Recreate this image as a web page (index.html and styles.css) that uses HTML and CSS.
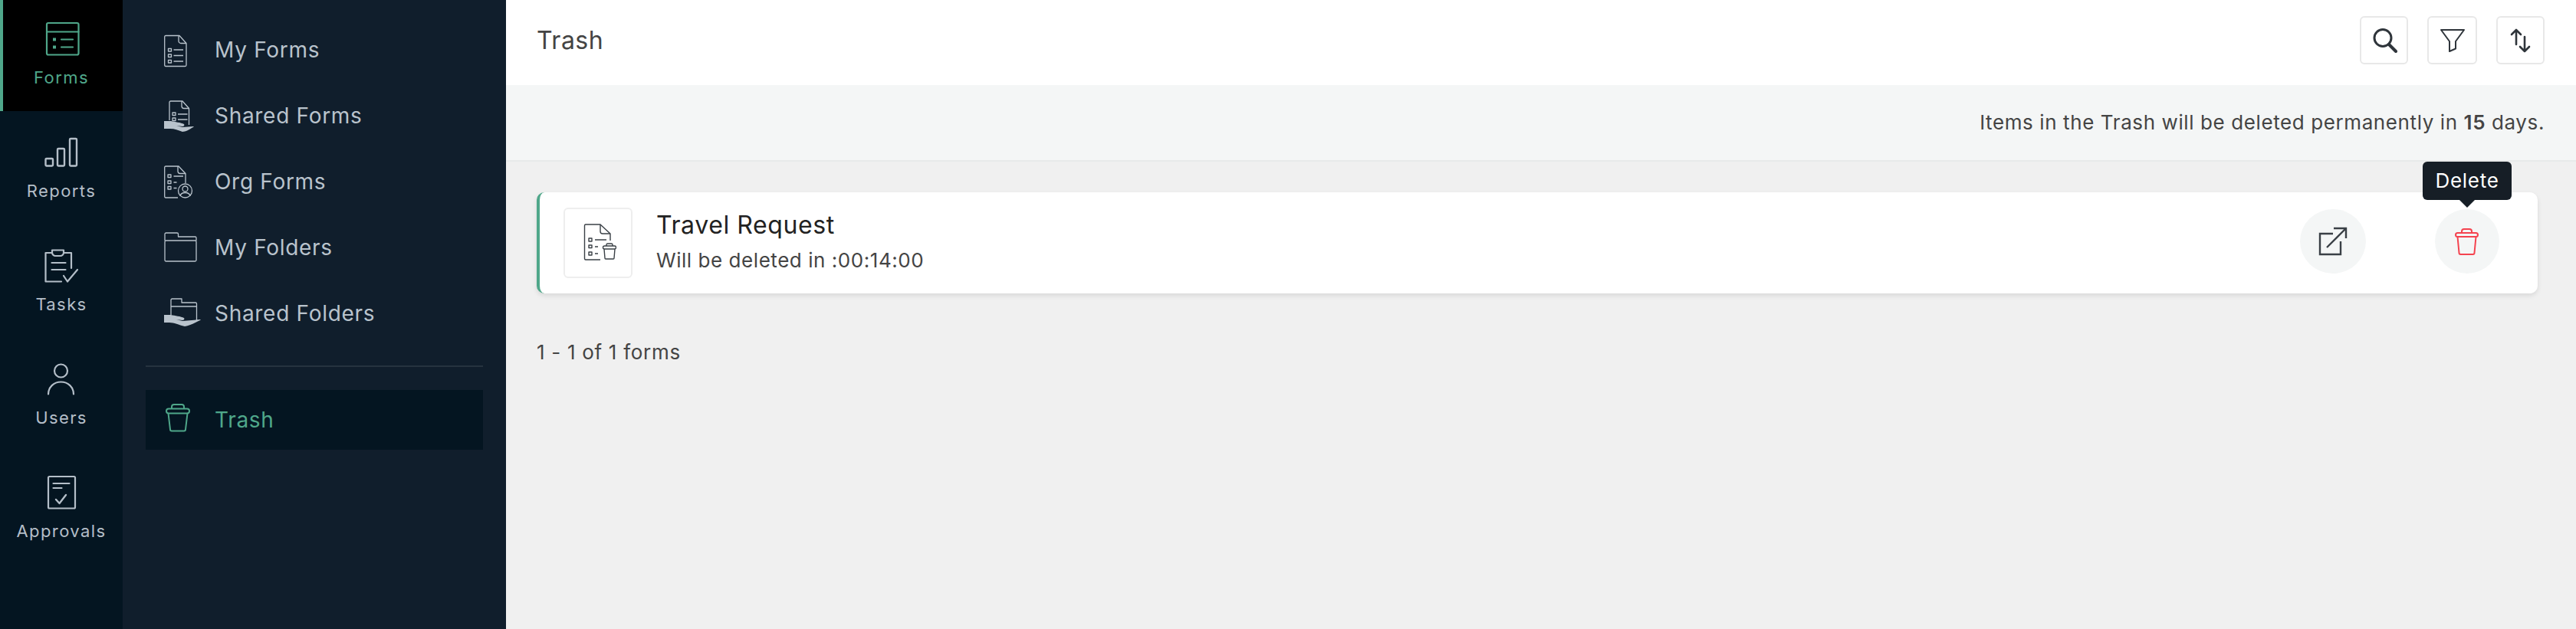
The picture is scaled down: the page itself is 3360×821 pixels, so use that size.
FILE: index.html
```html
<!DOCTYPE html>
<html lang="en">
<head>
    <meta charset="UTF-8">
    <title>Trash</title>
    <link rel="stylesheet" href="styles.css">
</head>
<body>
    <div class="app">
        <nav class="rail">
            <a class="rail-item active">
                <svg class="ico48" viewBox="0 0 48 48" fill="none" stroke="currentColor" stroke-width="2.2" stroke-linejoin="round" stroke-linecap="round">
                    <rect x="5" y="4" width="41.500" height="41.500" rx="2"/>
                    <path d="M5 15.500h41.500M24 25.500h15M24 35.500h15"/>
                    <path d="M13 25.500h4M13 35.500h4" stroke-width="3.800" stroke-linecap="butt"/>
                </svg>
                <span>Forms</span>
            </a>
            <a class="rail-item">
                <svg class="ico48" viewBox="0 0 48 48" fill="none" stroke="currentColor" stroke-width="2.4" stroke-linejoin="round">
                    <rect x="3.500" y="33" width="9.500" height="9.500" rx="1.200"/>
                    <rect x="19" y="20" width="9" height="22.500" rx="1.200"/>
                    <rect x="35" y="7" width="9" height="35.500" rx="1.200"/>
                </svg>
                <span>Reports</span>
            </a>
            <a class="rail-item">
                <svg class="ico48" viewBox="0 0 48 48" fill="none" stroke="currentColor" stroke-width="2.2" stroke-linecap="round" stroke-linejoin="round">
                    <path d="M12 8H3.500V45.500H24M27 8h10V28"/>
                    <path d="M12 4.500h15v3a4.500 4.500 0 0 1-4.500 4.500h-6A4.500 4.500 0 0 1 12 7.500z"/>
                    <path d="M11.500 21h18M11.500 30h18"/>
                    <path d="M27 38l5 7.500L45 30"/>
                </svg>
                <span>Tasks</span>
            </a>
            <a class="rail-item">
                <svg class="ico48" viewBox="0 0 48 48" fill="none" stroke="currentColor" stroke-width="2.2" stroke-linecap="round">
                    <circle cx="23.500" cy="14" r="8.500"/>
                    <path d="M7 44.500c0-9 7-16 16.500-16s16.500 7 16.500 16"/>
                </svg>
                <span>Users</span>
            </a>
            <a class="rail-item">
                <svg class="ico48" viewBox="0 0 48 48" fill="none" stroke="currentColor" stroke-width="2.2" stroke-linejoin="round" stroke-linecap="round">
                    <rect x="7" y="4" width="35" height="41.500" rx="1.500"/>
                    <path d="M13.500 13h21M13.500 19h11"/>
                    <path d="M17 34l4.500 5L30 28" stroke-width="2.400"/>
                </svg>
                <span>Approvals</span>
            </a>
        </nav>

        <aside class="sidebar">
            <ul class="side-list">
                <li class="side-item">
                    <svg class="ico48" viewBox="0 0 48 48" fill="none" stroke="currentColor" stroke-width="1.300" stroke-linejoin="round">
                        <path d="M2 5.500h18l9 10V44a1.500 1.500 0 0 1-1.500 1.500H2A1.500 1.500 0 0 1 .7 44V7A1.500 1.500 0 0 1 2 5.500z"/>
                        <path d="M19 5.500v7a3 3 0 0 0 3 3h7"/>
                        <path d="M5.500 22.500h4v3.500h-4zM5.500 30h4v3.500h-4zM5.500 37.500h4V41h-4zM12.500 24h12.500M12.500 31.500h12.500M12.500 39h12.500"/>
                    </svg>
                    <span>My Forms</span>
                </li>
                <li class="side-item">
                    <svg class="ico48" viewBox="0 0 48 48" fill="none" stroke="currentColor" stroke-width="1.300" stroke-linejoin="round">
                        <path d="M7 30V6.500A1.500 1.500 0 0 1 8.500 5H24l8.500 9.500V36"/>
                        <path d="M23 5v6.500a3 3 0 0 0 3 3h6.500"/>
                        <path d="M11 20h4v3.500h-4zM11 27h4v3.500h-4zM18 22h12.500M18 29h12.500"/>
                        <path d="M0 31l9 0c5 1 13 2 17 4 1 1 0 3-2 3l-8-1 8 2 14-1c1 0 1 1 0 1-5 3-10 6-14 6-6-2-10-4-16-4H0z" fill="currentColor" stroke="none"/>
                    </svg>
                    <span>Shared Forms</span>
                </li>
                <li class="side-item">
                    <svg class="ico48" viewBox="0 0 48 48" fill="none" stroke="currentColor" stroke-width="1.300" stroke-linejoin="round">
                        <path d="M18 45H2a1.500 1.500 0 0 1-1.300-1.500V5.500A1.500 1.500 0 0 1 2 4h17l9 9.500V26"/>
                        <path d="M18 4v6.500a3 3 0 0 0 3 3h7"/>
                        <path d="M5 15h4v3.500H5zM5 23h4v3.500H5zM5 30.500h4V34H5zM12.500 17h12.500M12.500 25h4M12.500 32.500h4"/>
                        <circle cx="27.500" cy="36" r="9"/>
                        <circle cx="27.500" cy="33.500" r="3.500"/>
                        <path d="M21 43c1-6 12-6 13 0"/>
                    </svg>
                    <span>Org Forms</span>
                </li>
                <li class="side-item">
                    <svg class="ico48" viewBox="0 0 48 48" fill="none" stroke="currentColor" stroke-width="1.300" stroke-linejoin="round">
                        <path d="M1 15V6.500A1.500 1.500 0 0 1 2.500 5H17a1.500 1.500 0 0 1 1.500 1.500V10h22a1.500 1.500 0 0 1 1.500 1.500V15"/>
                        <rect x="1" y="15" width="41" height="27" rx="1.500"/>
                    </svg>
                    <span>My Folders</span>
                </li>
                <li class="side-item">
                    <svg class="ico48" viewBox="0 0 48 48" fill="none" stroke="currentColor" stroke-width="1.300" stroke-linejoin="round">
                        <path d="M9 26V6.500A1.500 1.500 0 0 1 10.500 5H23v5h18a1.500 1.500 0 0 1 1.500 1.500V34"/>
                        <path d="M9 15h33.500"/>
                        <path d="M0 26l9 0c5 1 13 2 17 4 1 1 0 3-2 3l-8-1 8 2 23-2c1 0 1 1 0 1-8 4-14 7-20 8-8-2-14-5-20-5l-7 0z" fill="currentColor" stroke="none"/>
                    </svg>
                    <span>Shared Folders</span>
                </li>
            </ul>
            <div class="side-divider"></div>
            <div class="side-item selected">
                <svg class="ico48" viewBox="0 0 48 48" fill="none" stroke="currentColor" stroke-width="2" stroke-linejoin="round">
                    <rect x="3" y="9.500" width="30" height="6" rx="3"/>
                    <path d="M10 9.500V7a3 3 0 0 1 3-3h10a3 3 0 0 1 3 3v2.500"/>
                    <path d="M5.500 15.500l2.500 21a2 2 0 0 0 2 2h16a2 2 0 0 0 2-2l2.500-21"/>
                </svg>
                <span>Trash</span>
            </div>
        </aside>

        <main class="main">
            <header class="topbar">
                <h1>Trash</h1>
                <div class="tools">
                    <button class="tool">
                        <svg viewBox="0 0 34 34" fill="none" stroke="#2f353b" stroke-width="3" stroke-linecap="round">
                            <circle cx="15" cy="13.500" r="11"/>
                            <path d="M23 22l9 9" stroke-width="4"/>
                        </svg>
                    </button>
                    <button class="tool wide">
                        <svg viewBox="0 0 34 34" fill="none" stroke="#2f353b" stroke-width="2" stroke-linejoin="round">
                            <path d="M2 3h30L21 18v9.500L13 31V18z"/>
                        </svg>
                    </button>
                    <button class="tool">
                        <svg viewBox="0 0 34 34" fill="none" stroke="#2f353b" stroke-width="2.600" stroke-linecap="round" stroke-linejoin="round">
                            <path d="M11 22V3M5 9l6-6 6 6"/>
                            <path d="M22 12v19M16 25l6 6 6-6"/>
                        </svg>
                    </button>
                </div>
            </header>
            <div class="notice">Items in the Trash will be deleted permanently in <strong>15</strong> days.</div>
            <section class="content">
                <article class="card">
                    <div class="form-thumb">
                        <svg viewBox="0 0 48 50" fill="none" stroke="#3a4046" stroke-width="1.400" stroke-linejoin="round">
                            <path d="M27 47H8a1.500 1.500 0 0 1-1.500-1.500V2.500A1.500 1.500 0 0 1 8 1h19l13 12v9"/>
                            <path d="M27 1v9a3 3 0 0 0 3 3h10"/>
                            <path d="M12 19h4v4h-4zM12 28h4v3.500h-4zM12 37h4v4h-4zM20 21h15M20 30h4M20 39h4"/>
                            <rect x="30.500" y="29" width="17" height="4" rx="2"/>
                            <path d="M35 29v-1.500a1.500 1.500 0 0 1 1.500-1.500h5a1.500 1.500 0 0 1 1.500 1.500V29"/>
                            <path d="M32 33l1 12a1 1 0 0 0 1 1h10a1 1 0 0 0 1-1l1-12"/>
                        </svg>
                    </div>
                    <div class="card-text">
                        <div class="card-title">Travel Request</div>
                        <div class="card-sub">Will be deleted in :00:14:00</div>
                    </div>
                    <button class="round open">
                        <svg viewBox="0 0 38 38" fill="none" stroke="#3a4046" stroke-width="2.400">
                            <path d="M19 9H2v27h27V19"/>
                            <path d="M11 27L36 2M20 2h16v13"/>
                        </svg>
                    </button>
                    <button class="round del">
                        <svg viewBox="0 0 34 38" fill="none" stroke="#f4434f" stroke-width="2" stroke-linejoin="round">
                            <rect x="2" y="8" width="29" height="5" rx="2.500"/>
                            <path d="M10 8V6a3 3 0 0 1 3-3h7a3 3 0 0 1 3 3v2"/>
                            <path d="M4.500 13l2 21a2 2 0 0 0 2 2h16a2 2 0 0 0 2-2l2-21"/>
                        </svg>
                        <span class="tooltip">Delete</span>
                    </button>
                </article>
                <p class="count">1 - 1 of 1 forms</p>
            </section>
        </main>
    </div>
</body>
</html>
```

FILE: styles.css
```css
* { box-sizing: border-box; }
html, body { margin: 0; height: 100%; }
body { font-family: Inter, "Noto Sans", sans-serif; color: #333; overflow: hidden; }
ul { list-style: none; margin: 0; padding: 0; }
svg { display: block; }
.ico48 { width: 48px; height: 48px; flex: none; }

.app { display: flex; height: 821px; }

/* far left icon rail */
.rail { width: 160px; flex: none; background: #041521; color: #b4bec8; }
.rail-item { display: flex; flex-direction: column; align-items: center; height: 148px; padding-top: 29px; font-size: 22px; letter-spacing: 1.4px; }
.rail-item span { margin-top: 15px; line-height: 24px; }
.rail-item.active { height: 145px; padding-top: 26px; background: #000; color: #4fa78a; border-left: 4px solid #4fa78a; padding-right: 4px; }

/* second level menu */
.sidebar { width: 500px; flex: none; background: #101e2c; color: #b9c3cc; padding: 0 30px; }
.side-list { padding-top: 22px; }
.side-item { display: flex; align-items: center; height: 86px; padding-left: 24px; font-size: 28px; letter-spacing: 0.7px; }
.side-item span { margin-left: 18px; }
.side-divider { height: 2px; margin-top: 25px; background: #26333f; }
.side-item.selected { height: 78px; margin-top: 30px; background: #041521; color: #4fa78a; }

.main { flex: 1; min-width: 0; background: #f0f0f0; }
.topbar { display: flex; align-items: center; justify-content: space-between; height: 111px; padding: 0 41px 6px 40px; background: #fff; }
.topbar h1 { margin: 0; font-size: 32px; font-weight: 400; color: #444; letter-spacing: 0.5px; }
.tools { display: flex; gap: 25px; }
.tool { display: flex; align-items: center; justify-content: center; width: 63px; height: 63px; padding: 0; background: #fff; border: 2px solid #e8e8e8; border-radius: 6px; }
.tool.wide { width: 65px; }
.tool svg { width: 34px; height: 34px; }

.notice { height: 100px; padding: 0 41px; background: #f4f6f6; border-bottom: 2px solid #e8eaea; font-size: 26px; letter-spacing: 0.6px; line-height: 97px; text-align: right; color: #444; }
.notice strong { font-weight: 600; }

.content { padding: 40px 50px 0 40px; }
.card { display: flex; align-items: center; height: 132px; padding: 0 50px 0 31px; background: #fff; border-left: 4px solid #4fa78a; border-radius: 10px; box-shadow: 0 3px 6px rgba(0, 0, 0, 0.1); }
.form-thumb { display: flex; align-items: center; justify-content: center; width: 90px; height: 92px; background: #fff; border: 2px solid #eee; border-radius: 6px; }
.form-thumb svg { width: 48px; height: 50px; }
.card-text { flex: 1; margin: -5px 0 0 31px; }
.card-title { font-size: 32px; letter-spacing: 0.6px; line-height: 40px; color: #222; }
.card-sub { margin-top: 10px; font-size: 26px; letter-spacing: 0.55px; line-height: 32px; color: #444; }

.round { position: relative; display: flex; align-items: center; justify-content: center; width: 84px; height: 84px; margin-top: -4px; padding: 0; background: #f4f6f6; border: 0; border-radius: 50%; }
.round.open { width: 86px; margin-right: 90px; }
.open svg { width: 38px; height: 38px; }
.del svg { width: 34px; height: 38px; }

.tooltip { position: absolute; left: 50%; bottom: 96px; transform: translateX(-50%); width: 116px; height: 50px; background: #161e26; border-radius: 6px; color: #fff; font-family: Inter, sans-serif; font-size: 26px; letter-spacing: 0.7px; line-height: 50px; text-align: center; }
.tooltip::after { content: ""; position: absolute; left: 50%; top: 100%; margin-left: -10px; border: 10px solid transparent; border-bottom: 0; border-top-color: #161e26; }

.count { margin: 61px 0 0; font-size: 26px; letter-spacing: 0.7px; line-height: 32px; color: #444; }
```
